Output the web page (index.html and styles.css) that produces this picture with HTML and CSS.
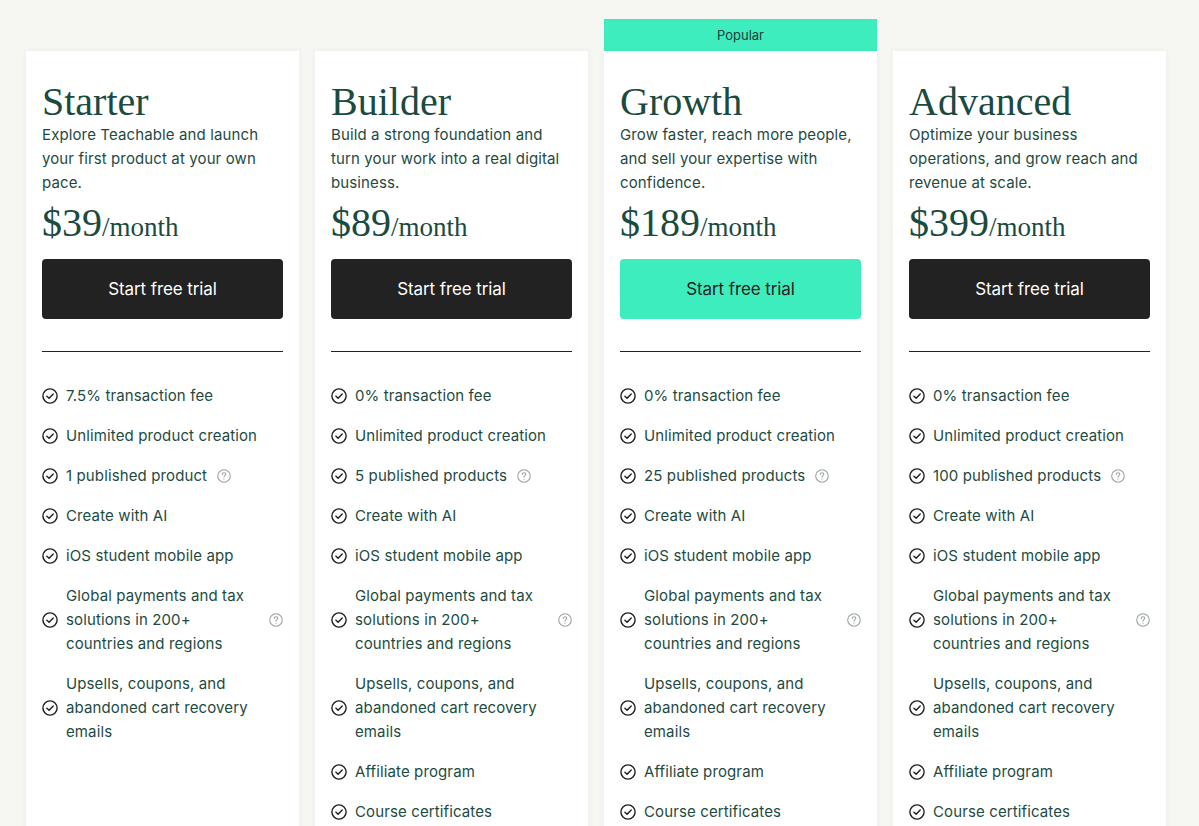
FILE: index.html
```html
<!DOCTYPE html>
<html lang="en">
<head>
<meta charset="utf-8">
<title>Pricing</title>
<link rel="stylesheet" href="styles.css">
</head>
<body>
<svg width="0" height="0" class="defs" aria-hidden="true">
  <defs>
    <symbol id="check" viewBox="0 0 16 16">
      <circle cx="8" cy="8" r="7.1" fill="none" stroke="#1f1f1f" stroke-width="1.4"/>
      <path d="M4.9 8.2 L7.1 10.3 L11.2 5.9" fill="none" stroke="#1f1f1f" stroke-width="1.4" stroke-linecap="round" stroke-linejoin="round"/>
    </symbol>
    <symbol id="help" viewBox="0 0 14 14">
      <circle cx="7" cy="7" r="6.3" fill="none" stroke="#9aa3a0" stroke-width="1.1"/>
      <path d="M5.2 5.4 C5.2 4.3 6 3.7 7 3.7 C8 3.7 8.8 4.3 8.8 5.2 C8.8 6.4 7 6.5 7 7.9" fill="none" stroke="#9aa3a0" stroke-width="1.1" stroke-linecap="round"/>
      <circle cx="7" cy="10.1" r="0.7" fill="#9aa3a0"/>
    </symbol>
  </defs>
</svg>
<main class="plans">
  <section class="plan">
    <div class="badge-slot"></div>
    <div class="card">
      <h2 class="title">Starter</h2>
      <p class="desc">Explore Teachable and launch your first product at your own pace.</p>
      <div class="price"><span class="amount">$39</span><span class="per">/month</span></div>
      <a class="btn">Start free trial</a>
      <hr class="rule">
      <ul class="features">
        <li><svg class="ic"><use href="#check"/></svg><span class="txt">7.5% transaction fee</span></li>
        <li><svg class="ic"><use href="#check"/></svg><span class="txt">Unlimited product creation</span></li>
        <li><svg class="ic"><use href="#check"/></svg><span class="txt">1 published product</span><svg class="hp"><use href="#help"/></svg></li>
        <li><svg class="ic"><use href="#check"/></svg><span class="txt">Create with AI</span></li>
        <li><svg class="ic"><use href="#check"/></svg><span class="txt">iOS student mobile app</span></li>
        <li><svg class="ic"><use href="#check"/></svg><span class="txt">Global payments and tax solutions in 200+ countries and regions</span><svg class="hp"><use href="#help"/></svg></li>
        <li><svg class="ic"><use href="#check"/></svg><span class="txt">Upsells, coupons, and abandoned cart recovery emails</span></li>
      </ul>
    </div>
  </section>
  <section class="plan">
    <div class="badge-slot"></div>
    <div class="card">
      <h2 class="title">Builder</h2>
      <p class="desc">Build a strong foundation and turn your work into a real digital business.</p>
      <div class="price"><span class="amount">$89</span><span class="per">/month</span></div>
      <a class="btn">Start free trial</a>
      <hr class="rule">
      <ul class="features">
        <li><svg class="ic"><use href="#check"/></svg><span class="txt">0% transaction fee</span></li>
        <li><svg class="ic"><use href="#check"/></svg><span class="txt">Unlimited product creation</span></li>
        <li><svg class="ic"><use href="#check"/></svg><span class="txt">5 published products</span><svg class="hp"><use href="#help"/></svg></li>
        <li><svg class="ic"><use href="#check"/></svg><span class="txt">Create with AI</span></li>
        <li><svg class="ic"><use href="#check"/></svg><span class="txt">iOS student mobile app</span></li>
        <li><svg class="ic"><use href="#check"/></svg><span class="txt">Global payments and tax solutions in 200+ countries and regions</span><svg class="hp"><use href="#help"/></svg></li>
        <li><svg class="ic"><use href="#check"/></svg><span class="txt">Upsells, coupons, and abandoned cart recovery emails</span></li>
        <li><svg class="ic"><use href="#check"/></svg><span class="txt">Affiliate program</span></li>
        <li><svg class="ic"><use href="#check"/></svg><span class="txt">Course certificates</span></li>
      </ul>
    </div>
  </section>
  <section class="plan">
    <div class="badge-slot"><div class="badge">Popular</div></div>
    <div class="card">
      <h2 class="title">Growth</h2>
      <p class="desc">Grow faster, reach more people, and sell your expertise with confidence.</p>
      <div class="price"><span class="amount">$189</span><span class="per">/month</span></div>
      <a class="btn btn-accent">Start free trial</a>
      <hr class="rule">
      <ul class="features">
        <li><svg class="ic"><use href="#check"/></svg><span class="txt">0% transaction fee</span></li>
        <li><svg class="ic"><use href="#check"/></svg><span class="txt">Unlimited product creation</span></li>
        <li><svg class="ic"><use href="#check"/></svg><span class="txt">25 published products</span><svg class="hp"><use href="#help"/></svg></li>
        <li><svg class="ic"><use href="#check"/></svg><span class="txt">Create with AI</span></li>
        <li><svg class="ic"><use href="#check"/></svg><span class="txt">iOS student mobile app</span></li>
        <li><svg class="ic"><use href="#check"/></svg><span class="txt">Global payments and tax solutions in 200+ countries and regions</span><svg class="hp"><use href="#help"/></svg></li>
        <li><svg class="ic"><use href="#check"/></svg><span class="txt">Upsells, coupons, and abandoned cart recovery emails</span></li>
        <li><svg class="ic"><use href="#check"/></svg><span class="txt">Affiliate program</span></li>
        <li><svg class="ic"><use href="#check"/></svg><span class="txt">Course certificates</span></li>
      </ul>
    </div>
  </section>
  <section class="plan">
    <div class="badge-slot"></div>
    <div class="card">
      <h2 class="title">Advanced</h2>
      <p class="desc">Optimize your business operations, and grow reach and revenue at scale.</p>
      <div class="price"><span class="amount">$399</span><span class="per">/month</span></div>
      <a class="btn">Start free trial</a>
      <hr class="rule">
      <ul class="features">
        <li><svg class="ic"><use href="#check"/></svg><span class="txt">0% transaction fee</span></li>
        <li><svg class="ic"><use href="#check"/></svg><span class="txt">Unlimited product creation</span></li>
        <li><svg class="ic"><use href="#check"/></svg><span class="txt">100 published products</span><svg class="hp"><use href="#help"/></svg></li>
        <li><svg class="ic"><use href="#check"/></svg><span class="txt">Create with AI</span></li>
        <li><svg class="ic"><use href="#check"/></svg><span class="txt">iOS student mobile app</span></li>
        <li><svg class="ic"><use href="#check"/></svg><span class="txt">Global payments and tax solutions in 200+ countries and regions</span><svg class="hp"><use href="#help"/></svg></li>
        <li><svg class="ic"><use href="#check"/></svg><span class="txt">Upsells, coupons, and abandoned cart recovery emails</span></li>
        <li><svg class="ic"><use href="#check"/></svg><span class="txt">Affiliate program</span></li>
        <li><svg class="ic"><use href="#check"/></svg><span class="txt">Course certificates</span></li>
      </ul>
    </div>
  </section>
</main>
</body>
</html>
```
FILE: styles.css
```css
* { box-sizing: border-box; }
html, body { margin: 0; padding: 0; }
body {
  background: #f6f7f3;
  font-family: "Inter", "Liberation Sans", sans-serif;
  color: #1d4b42;
  overflow: hidden;
}
.defs { position: absolute; width: 0; height: 0; }
.plans {
  display: grid;
  grid-template-columns: repeat(4, 273px);
  column-gap: 16px;
  padding: 19px 0 0 26px;
  align-items: stretch;
}
.plan { display: flex; flex-direction: column; }
.badge-slot { height: 32px; flex: none; }
.badge {
  height: 32px;
  background: #3eedbd;
  color: #1e3d37;
  font-size: 13px;
  line-height: 32px;
  text-align: center;
}
.card {
  flex: 1;
  background: #fff;
  box-shadow: 0 0 6px rgba(60, 70, 60, 0.06);
  padding: 29px 16px 40px;
  display: flex;
  flex-direction: column;
  min-height: 900px;
}
.title {
  margin: 0;
  font-family: "Liberation Serif", "Times New Roman", serif;
  font-weight: 400;
  font-size: 40px;
  line-height: 43px;
  color: #1b4a41;
}
.desc {
  margin: 0;
  font-size: 15px;
  line-height: 24px;
  letter-spacing: 0.12px;
}
.price {
  margin-top: 4px;
  font-family: "Liberation Serif", "Times New Roman", serif;
  color: #1b4a41;
  height: 48px;
  line-height: 48px;
}
.amount { font-size: 40px; }
.per { font-size: 27px; }
.btn {
  display: flex;
  align-items: center;
  justify-content: center;
  margin-top: 12px;
  height: 60px;
  background: #222222;
  color: #fff;
  border-radius: 4px;
  font-size: 17px;
  letter-spacing: -0.1px;
}
.btn-accent { background: #3eedbd; color: #222; }
.rule {
  margin: 32px 0 0;
  border: 0;
  border-top: 1px solid #222;
  height: 0;
}
.features {
  list-style: none;
  margin: 32px 0 0;
  padding: 0;
  display: flex;
  flex-direction: column;
  gap: 16px;
}
.features li {
  display: flex;
  align-items: center;
  font-size: 15px;
  line-height: 24px;
  letter-spacing: 0.12px;
}
.ic { width: 16px; height: 16px; flex: none; margin-right: 8px; }
.txt { flex: 0 1 auto; }
.hp { width: 14px; height: 14px; flex: none; margin-left: 10px; }
```
